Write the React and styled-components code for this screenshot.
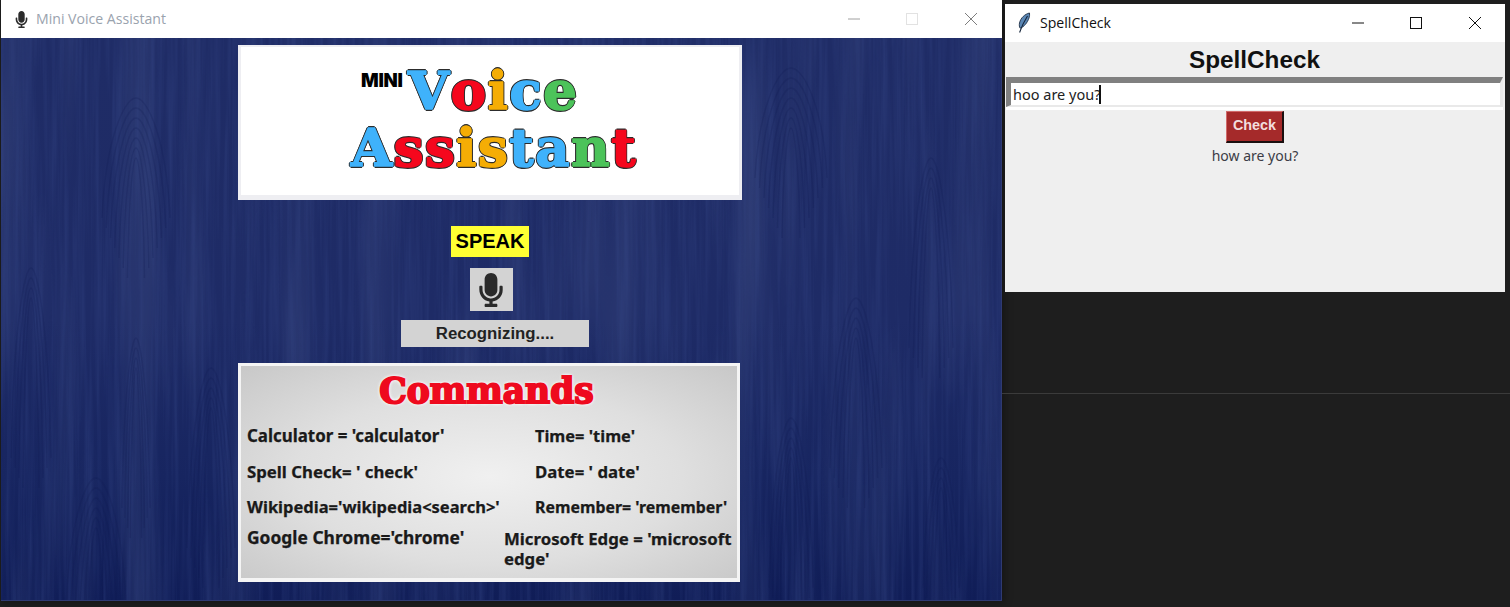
import React from "react";
import styled, { createGlobalStyle } from "styled-components";
import { FaMicrophone } from "react-icons/fa";

const Global = createGlobalStyle`
  html, body { margin: 0; padding: 0; background: #1e1e1e; }
  * { box-sizing: border-box; }
  #root { width: 1510px; height: 607px; overflow: hidden; }
`;

const Desktop = styled.div`
  display: flex;
  align-items: flex-start;
  width: 1510px;
  height: 607px;
  background: #1e1e1e;
  padding-left: 1px;
`;

const MainWindow = styled.section`
  display: flex;
  flex-direction: column;
  width: 1001px;
  height: 601px;
  flex: none;
  box-shadow: 2px 1px 8px rgba(0, 0, 0, 0.35);
`;

const TitleBar = styled.header`
  display: flex;
  align-items: center;
  height: 38px;
  flex: none;
  background: #fff;
  padding-left: ${(p) => p.$pad}px;
  font-family: "Open Sans", "Noto Sans", sans-serif;
  font-size: 14.1px;
`;

const TitleIcon = styled.span`
  display: flex;
  align-items: center;
  justify-content: center;
  width: 20px;
  margin-right: ${(p) => p.$gap}px;
  color: #2b2b2b;
`;

const TitleText = styled.span`
  flex: 1;
  color: ${(p) => p.$color};
  padding-bottom: 2px;
`;

const Controls = styled.div`
  display: flex;
  padding-right: ${(p) => p.$pad}px;
`;

const Control = styled.span`
  display: flex;
  align-items: center;
  justify-content: center;
  width: 58.5px;
  height: 38px;
  color: ${(p) => p.$color};
`;

const Canvas = styled.main`
  position: relative;
  flex: 1;
  overflow: hidden;
  border: 1px solid #2f3a72;
  border-top: 0;
  border-left: 0;
  background: linear-gradient(180deg, #1f2c66 0%, #1e2b66 50%, #172560 78%, #101d57 100%);
`;

const WoodLayer = styled.svg`
  position: absolute;
  left: 0;
  top: 0;
  width: 100%;
  height: 100%;
  pointer-events: none;
`;

const Stage = styled.div`
  position: relative;
  display: flex;
  flex-direction: column;
  align-items: center;
  width: 506px;
  margin-left: 235px;
  padding-top: 7px;
`;

const LogoCard = styled.div`
  display: flex;
  flex-direction: column;
  align-items: center;
  width: 504px;
  height: 155px;
  margin-left: 2px;
  background: #fff;
  border: 3px solid #eeeef2;
  border-top-width: 2px;
  border-bottom-width: 5px;
  padding-top: 15px;
`;

const LogoRow = styled.div`
  display: flex;
  align-items: flex-start;
  width: 290px;
  height: ${(p) => p.$h}px;
  margin-left: 12px;
  padding-left: ${(p) => p.$pad || 0}px;
`;

const Mini = styled.span`
  font-family: Inter, "Liberation Sans", sans-serif;
  font-weight: 900;
  font-size: 18.5px;
  line-height: 18px;
  color: #000;
  width: 47px;
  margin-top: 9px;
  flex: none;
  letter-spacing: -0.3px;
`;

const LogoWord = styled.span`
  display: inline-flex;
  font-family: "DejaVu Serif", "Liberation Serif", serif;
  font-weight: 700;
  font-size: 53px;
  line-height: 56px;
  height: 56px;
  letter-spacing: ${(p) => p.$ls}px;
  white-space: nowrap;
`;

const LogoLetter = styled.span`
  display: block;
  height: 56px;
  color: ${(p) => p.$c};
  -webkit-text-stroke: 1.6px ${(p) => p.$c};
  text-shadow: 1.7px 0 0 #2c2c2c, -1.7px 0 0 #2c2c2c, 0 1.7px 0 #2c2c2c, 0 -1.7px 0 #2c2c2c,
    1.3px 1.3px 0 #2c2c2c, -1.3px 1.3px 0 #2c2c2c, 1.3px -1.3px 0 #2c2c2c, -1.3px -1.3px 0 #2c2c2c;
`;

const SpeakLabel = styled.div`
  margin-top: 26px;
  width: 78px;
  height: 31px;
  margin-left: 2px;
  background: #ffff33;
  font-family: "Liberation Sans", sans-serif;
  font-weight: 700;
  font-size: 20px;
  line-height: 30px;
  text-align: center;
  color: #000;
`;

const MicButton = styled.div`
  display: flex;
  align-items: center;
  justify-content: center;
  margin-top: 11px;
  margin-left: 4px;
  width: 43px;
  height: 43px;
  background: #d3d3d3;
  color: #2a2a2a;
`;

const Status = styled.div`
  margin-top: 9px;
  margin-left: 12px;
  width: 188px;
  height: 27px;
  background: #d3d3d3;
  font-family: "Liberation Sans", sans-serif;
  font-weight: 700;
  font-size: 16.8px;
  line-height: 27px;
  text-align: center;
  color: #222;
`;

const Commands = styled.div`
  margin-top: 16px;
  width: 502px;
  height: 219px;
  border: 3px solid #f4f4f4;
  border-bottom-width: 4px;
  background: radial-gradient(ellipse at 50% 52%, #f0f0f0 0%, #dfdfdf 55%, #c8c8c8 100%);
  padding: 0 0 0 6px;
`;

const CommandsTitle = styled.h2`
  margin: 0;
  height: 52px;
  padding-right: 11px;
  font-family: "DejaVu Serif", serif;
  font-weight: 700;
  font-size: 34.5px;
  line-height: 51px;
  text-align: center;
  color: #ee0a1e;
  -webkit-text-stroke: 2px #ee0a1e;
  text-shadow: 0 0 4px #fff, 0 0 4px #fff, 0 0 3px #fff, 0 0 2px #fff;
`;

const CommandGrid = styled.div`
  display: grid;
  grid-template-columns: 288px 1fr;
  grid-auto-rows: 35.6px;
  padding-top: 7px;
`;

const CommandText = styled.div`
  font-family: "Noto Sans", "Open Sans", sans-serif;
  font-weight: 700;
  font-size: ${(p) => p.$size}px;
  line-height: 22px;
  color: #1a1a1a;
  -webkit-text-stroke: 0.25px #1a1a1a;
  white-space: nowrap;
  margin-top: ${(p) => p.$dy || 0}px;
`;

const WrapCommand = styled(CommandText)`
  margin-left: -31px;
  margin-top: -3px;
  white-space: normal;
  line-height: 20px;
  width: 236px;
`;

const SideColumn = styled.div`
  display: flex;
  flex-direction: column;
  margin-left: 3px;
  width: 505px;
  flex: none;
  padding-top: 4px;
`;

const SpellWindow = styled.section`
  display: flex;
  flex-direction: column;
  width: 500px;
  height: 288px;
  background: #efefef;
`;

const SpellHeading = styled.h1`
  margin: 0;
  height: 35px;
  padding-right: 1px;
  font-family: "Liberation Sans", sans-serif;
  font-weight: 700;
  font-size: 24.3px;
  line-height: 36px;
  text-align: center;
  color: #111;
`;

const EntryBox = styled.div`
  display: flex;
  align-items: center;
  height: 30px;
  margin: 0 2px 3px 1px;
  background: #fff;
  border-style: solid;
  border-width: 6px 3px 2px 5px;
  border-color: #808080 #e9e9e9 #e9e9e9 #808080;
  box-shadow: 0 3px 0 #fff;
  padding-left: 2px;
  font-family: "Noto Sans", "Open Sans", sans-serif;
  font-size: 14.5px;
  color: #222;
`;

const Caret = styled.span`
  display: inline-block;
  width: 2px;
  height: 19px;
  margin-left: -1px;
  background: #111;
`;

const CheckButton = styled.div`
  align-self: center;
  width: 58px;
  height: 32px;
  margin-top: 1px;
  background: #a52a2a;
  border-style: solid;
  border-width: 1px 2px 2px 1px;
  border-color: #d06a6a #1a1010 #1a1010 #d06a6a;
  font-family: "Liberation Sans", sans-serif;
  font-weight: 700;
  font-size: 14.4px;
  line-height: 27px;
  text-align: center;
  color: #f2dede;
`;

const Result = styled.div`
  margin-top: 3px;
  font-family: "Noto Sans", "Open Sans", sans-serif;
  font-size: 14px;
  line-height: 20px;
  text-align: center;
  color: #3c3c46;
`;

const Divider = styled.hr`
  width: 508px;
  height: 1px;
  margin: 101px 0 0 -3px;
  border: 0;
  background: #3b3b3b;
  flex: none;
`;

const MinGlyph = () => (
  <svg width="14" height="12" viewBox="0 0 14 12"><path d="M1 6h12" stroke="currentColor" fill="none" /></svg>
);
const MaxGlyph = () => (
  <svg width="14" height="14" viewBox="0 0 14 14"><rect x="1.5" y="1.5" width="11" height="11" stroke="currentColor" fill="none" /></svg>
);
const CloseGlyph = () => (
  <svg width="14" height="14" viewBox="0 0 14 14"><path d="M1 1l12 12M13 1L1 13" stroke="currentColor" fill="none" /></svg>
);

const Feather = () => (
  <svg width="14" height="22" viewBox="0 0 14 22">
    <path d="M12.5 1C8 2 3.5 6 2.5 11c-.4 2.2-.2 4 .6 5.2C7 15 10.5 10.5 12 6c.5-1.8.8-3.5.5-5z" fill="#5a86b4" stroke="#1f3046" strokeWidth="0.9" />
    <path d="M10.5 4C8 8 5 13 2.6 20.5" stroke="#16263c" strokeWidth="1.1" fill="none" />
  </svg>
);

const Word = ({ letters, ls }) => (
  <LogoWord $ls={ls}>
    {letters.map(([ch, c], i) => (
      <LogoLetter key={i} $c={c}>{ch}</LogoLetter>
    ))}
  </LogoWord>
);

const BLUE = "#3fb2fb";
const RED = "#f5071d";
const AMBER = "#f5ad05";
const GREEN = "#4cc35a";

const voice = [["V", BLUE], ["o", RED], ["i", AMBER], ["c", BLUE], ["e", GREEN]];
const assistant = [["A", BLUE], ["s", RED], ["s", RED], ["i", AMBER], ["s", AMBER], ["t", BLUE], ["a", BLUE], ["n", GREEN], ["t", RED]];

const cathedrals = [
  { x: 135, y: 60, w: 34, h: 120, n: 7 },
  { x: 95, y: 440, w: 30, h: 130, n: 6 },
  { x: 135, y: 300, w: 14, h: 170, n: 4 },
  { x: 30, y: 230, w: 20, h: 190, n: 4 },
  { x: 210, y: 330, w: 24, h: 180, n: 5 },
  { x: 790, y: 30, w: 36, h: 110, n: 7 },
  { x: 855, y: 260, w: 26, h: 170, n: 5 },
  { x: 790, y: 380, w: 22, h: 170, n: 5 },
  { x: 930, y: 120, w: 22, h: 190, n: 4 },
  { x: 940, y: 420, w: 18, h: 130, n: 4 },
];

const archPath = (x, y, w, h) =>
  `M${x - w} ${y + h}C${x - w * 0.9} ${y + h * 0.35} ${x - w * 0.35} ${y} ${x} ${y}C${x + w * 0.35} ${y} ${x + w * 0.9} ${y + h * 0.35} ${x + w} ${y + h}`;

const Wood = () => (
  <WoodLayer>
    <defs>
      <filter id="grain" x="0" y="0" width="100%" height="100%">
        <feTurbulence type="fractalNoise" baseFrequency="0.22 0.006" numOctaves="3" seed="11" />
        <feColorMatrix values="0 0 0 0 0.04  0 0 0 0 0.07  0 0 0 0 0.26  1.5 0 0 0 -0.55" />
      </filter>
      <filter id="sheen" x="0" y="0" width="100%" height="100%">
        <feTurbulence type="fractalNoise" baseFrequency="0.025 0.003" numOctaves="2" seed="4" />
        <feColorMatrix values="0 0 0 0 0.2  0 0 0 0 0.27  0 0 0 0 0.5  1.3 0 0 0 -0.55" />
      </filter>
    </defs>
    <rect width="100%" height="100%" filter="url(#sheen)" opacity="0.28" />
    <rect width="100%" height="100%" filter="url(#grain)" opacity="0.42" />
    {cathedrals.flatMap((c, ci) =>
      Array.from({ length: c.n }, (_, i) => (
        <path
          key={`${ci}-${i}`}
          d={archPath(c.x, c.y + i * 10, c.w - i * (c.w / (c.n + 1)), c.h)}
          fill="none"
          stroke="#0d1850"
          strokeWidth="1.3"
          opacity="0.2"
        />
      ))
    )}
  </WoodLayer>
);

export default function App() {
  return (
    <Desktop>
      <Global />
      <MainWindow>
        <TitleBar $pad={10}>
          <TitleIcon $gap={5}><FaMicrophone size={17} /></TitleIcon>
          <TitleText $color="#9aa3ae">Mini Voice Assistant</TitleText>
          <Controls $pad={2}>
            <Control $color="#a0a0a0"><MinGlyph /></Control>
            <Control $color="#e2e2e2"><MaxGlyph /></Control>
            <Control $color="#7d7d7d"><CloseGlyph /></Control>
          </Controls>
        </TitleBar>
        <Canvas>
          <Wood />
          <Stage>
            <LogoCard>
              <LogoRow $h={57} $pad={10}>
                <Mini>MINI</Mini>
                <Word letters={voice} ls={1.6} />
              </LogoRow>
              <LogoRow $h={56}>
                <Word letters={assistant} ls={1.5} />
              </LogoRow>
            </LogoCard>
            <SpeakLabel>SPEAK</SpeakLabel>
            <MicButton><FaMicrophone size={34} /></MicButton>
            <Status>Recognizing....</Status>
            <Commands>
              <CommandsTitle>Commands</CommandsTitle>
              <CommandGrid>
                <CommandText $size={16.9}>Calculator = 'calculator'</CommandText>
                <CommandText $size={16.4}>Time= 'time'</CommandText>
                <CommandText $size={16.8}>Spell Check= ' check'</CommandText>
                <CommandText $size={16.8}>Date= ' date'</CommandText>
                <CommandText $size={16.5}>Wikipedia='wikipedia&lt;search&gt;'</CommandText>
                <CommandText $size={15.9}>Remember= 'remember'</CommandText>
                <CommandText $size={17.4} $dy={-6}>Google Chrome='chrome'</CommandText>
                <WrapCommand $size={16.8}>Microsoft Edge = 'microsoft edge'</WrapCommand>
              </CommandGrid>
            </Commands>
          </Stage>
        </Canvas>
      </MainWindow>
      <SideColumn>
        <SpellWindow>
          <TitleBar $pad={9}>
            <TitleIcon $gap={6}><Feather /></TitleIcon>
            <TitleText $color="#111">SpellCheck</TitleText>
            <Controls $pad={1}>
              <Control $color="#111"><MinGlyph /></Control>
              <Control $color="#111"><MaxGlyph /></Control>
              <Control $color="#111"><CloseGlyph /></Control>
            </Controls>
          </TitleBar>
          <SpellHeading>SpellCheck</SpellHeading>
          <EntryBox>hoo are you?<Caret /></EntryBox>
          <CheckButton>Check</CheckButton>
          <Result>how are you?</Result>
        </SpellWindow>
        <Divider />
      </SideColumn>
    </Desktop>
  );
}
